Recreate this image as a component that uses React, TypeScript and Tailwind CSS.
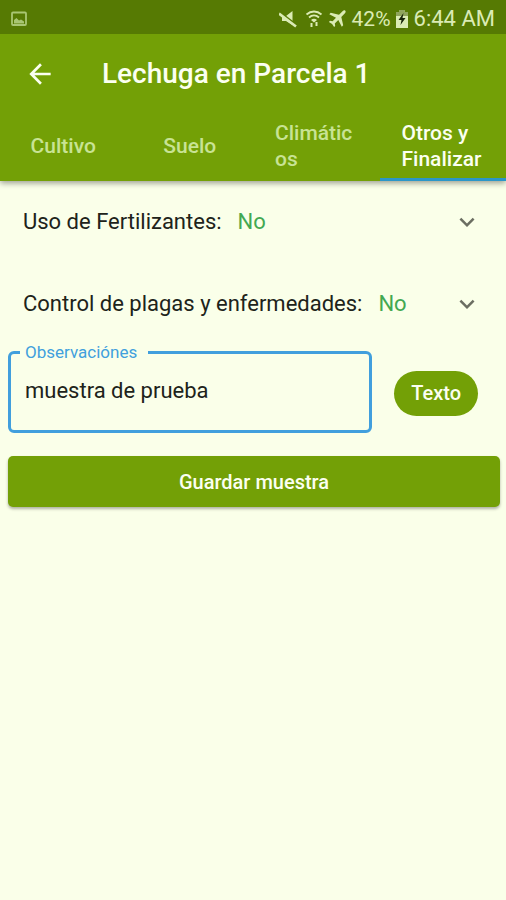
import { useState } from "react"
import { MdArrowBack, MdExpandMore } from "react-icons/md"

const tabs = ["Cultivo", "Suelo", "Climáticos", "Otros y Finalizar"]

const sections = [
  { title: "Uso de Fertilizantes:", value: "No" },
  { title: "Control de plagas y enfermedades:", value: "No" },
]

function StatusBar() {
  return (
    <div className="flex h-[34px] items-center bg-[#567a03] px-[11px] pt-[3px] text-[#dbebb5]">
      <svg width="16" height="16" viewBox="0 0 16 16" className="text-[#a9c673]">
        <rect x="1" y="1.5" width="14" height="12.5" rx="1" fill="none" stroke="currentColor" strokeWidth="1.8" />
        <path d="M3 12.500V9l2.500-2L8 9.500l2-1 3 2v2z" fill="currentColor" />
      </svg>
      <div className="ml-auto flex items-center">
        {/* muted speaker */}
        <svg width="18" height="18" viewBox="0 0 18 18" fill="currentColor">
          <path d="M3 6h4l6.500-5v14L7 11H3z" />
          <path d="M0 1.500l17 13" stroke="#567a03" strokeWidth="2" />
          <path d="M0 3.500l17 13" stroke="currentColor" strokeWidth="2.600" />
        </svg>
        {/* wifi with traffic arrows */}
        <svg width="18" height="18" viewBox="0 0 18 18" fill="none" stroke="currentColor" className="ml-[8px]">
          <path d="M1.500 4.500c4.500-4 10.500-4 15 0" strokeWidth="1.800" />
          <path d="M4 7.500c3-2.700 7-2.700 10 0" strokeWidth="1.800" />
          <path d="M6 10c1.800-1.700 4.200-1.700 6 0l-3 2.500z" fill="currentColor" stroke="none" />
          <path d="M6.500 17v-4M11.500 12v4" strokeWidth="2" />
        </svg>
        <svg width="18" height="18" viewBox="0 0 18 18" fill="currentColor" className="ml-[5px]">
          <path d="M17.300.700c.700.700.300 1.900-.600 2.800L13.300 7l1.900 8.300-1.400 1.400L10.300 10l-3.500 3.400.4 2.600-1.100 1.100-2-3.200-3.200-2 1.100-1.100 2.600.4L8 7.700 1.300 4.200l1.400-1.400L11 4.700l3.500-3.400c.9-.9 2.100-1.300 2.800-.6z" />
        </svg>
        <span className="ml-[6px] text-[21px] leading-[24px]">42%</span>
        <svg width="12" height="18" viewBox="0 0 12 18" className="ml-[5px]">
          <path d="M3.500 0h5v2H12v16H0V2h3.500z" fill="currentColor" />
          <path d="M0 2h3.500V0h5v2H12v4H0z" fill="#8fa45c" />
          <path d="M7.500 3 2.500 10h3l-1 5 5-7h-3z" fill="#17240a" />
        </svg>
        <span className="ml-[6px] text-[22px] leading-[24px]">6:44 AM</span>
      </div>
    </div>
  )
}

export default function App() {
  const [active, setActive] = useState(3)
  const [notes, setNotes] = useState("muestra de prueba")

  return (
    <div className="min-h-screen bg-[#faffe9] font-[Roboto,sans-serif] text-[#20231a]">
      <header className="bg-[#73a006] shadow-[0_2px_6px_rgba(0,0,0,0.4)]">
        <StatusBar />
        <div className="flex h-[80px] items-center px-[24px]">
          <button aria-label="Volver" className="text-[#fbfff0]">
            <MdArrowBack size={32} />
          </button>
          <h1 className="ml-[46px] text-[28px] font-medium leading-[32px] text-[#fbfff0]">Lechuga en Parcela 1</h1>
        </div>
        <nav role="tablist" className="grid h-[67px] grid-cols-4">
          {tabs.map((tab, i) => (
            <button
              key={tab}
              role="tab"
              aria-selected={i === active}
              onClick={() => setActive(i)}
              className={
                i === active
                  ? "flex items-center justify-center border-b-[3px] border-[#2b96c8] px-[22px] text-left text-[21px] font-medium leading-[26px] text-[#fbfff0]"
                  : "flex items-center justify-center border-b-[3px] border-transparent px-[22px] text-left text-[21px] font-medium leading-[26px] text-[#c8e394]"
              }
            >
              <span className="min-w-0 [overflow-wrap:anywhere]">{tab}</span>
            </button>
          ))}
        </nav>
      </header>

      <main>
        {sections.map((section) => (
          <button key={section.title} className="flex h-[82px] w-full items-center pl-[23px] pr-[24px] text-left">
            <span className="text-[22px] leading-[26px]">{section.title}</span>
            <span className="ml-[16px] text-[22px] leading-[26px] text-[#43a852]">{section.value}</span>
            <MdExpandMore size={30} className="ml-auto text-[#6b6e62]" />
          </button>
        ))}

        <div className="flex items-center pl-[8px] pr-[6px]">
          <fieldset className="-mt-[2px] min-w-0 flex-1 rounded-[6px] border-[3px] border-[#419fdd] pb-[26px] pl-[9px]">
            <legend className="pl-[5px] pr-[11px] text-[17px] leading-[18px] text-[#419fdd]">
              <label htmlFor="notes">Observaciónes</label>
            </legend>
            <input
              id="notes"
              value={notes}
              onChange={(e) => setNotes(e.target.value)}
              className="mt-[17px] block w-full pl-[5px] text-[22px] leading-[26px] outline-none"
            />
          </fieldset>
          <button className="ml-[22px] mr-[22px] mt-[8px] h-[45px] rounded-full bg-[#73a006] px-[17px] text-[20px] font-medium text-[#fbfff0]">
            Texto
          </button>
        </div>

        <div className="pl-[8px] pr-[6px] pt-[23px]">
          <button className="h-[51px] w-full rounded-[5px] bg-[#73a006] text-[20px] font-medium text-[#fbfff0] shadow-[0_2px_3px_rgba(0,0,0,0.3)]">
            Guardar muestra
          </button>
        </div>
      </main>
    </div>
  )
}
